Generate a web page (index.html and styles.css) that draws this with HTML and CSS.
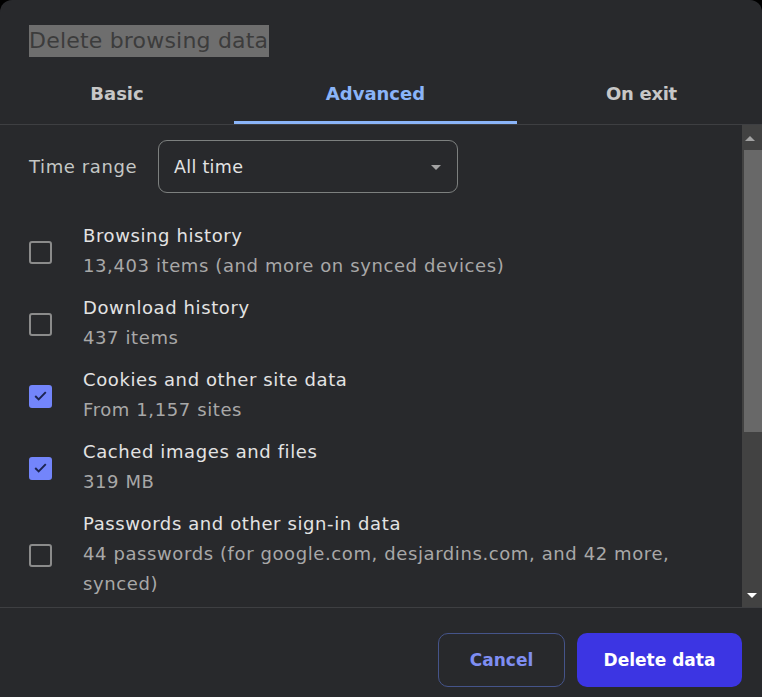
FILE: index.html
```html
<!DOCTYPE html>
<html>
<head>
<meta charset="utf-8">
<link rel="stylesheet" href="styles.css">
</head>
<body>
<div class="dialog">
  <div class="title-wrap"><span class="title">Delete browsing data</span></div>
  <div class="tabs">
    <div class="tab tab-basic">Basic</div>
    <div class="tab tab-adv active">Advanced</div>
    <div class="tab tab-exit">On exit</div>
  </div>
  <div class="body">
    <div class="content">
      <div class="range">
        <span class="range-label">Time range</span>
        <div class="select"><span>All time</span><span class="caret"></span></div>
      </div>
      <div class="items">
        <div class="item">
          <span class="box"></span>
          <div class="texts"><div class="it-title">Browsing history</div><div class="it-sub">13,403 items (and more on synced devices)</div></div>
        </div>
        <div class="item">
          <span class="box"></span>
          <div class="texts"><div class="it-title">Download history</div><div class="it-sub">437 items</div></div>
        </div>
        <div class="item">
          <span class="box checked"><svg viewBox="0 0 24 24" width="23" height="23"><path d="M6.5 12.5l3.6 3.6 7.4-7.6" fill="none" stroke="#1c2450" stroke-width="2"/></svg></span>
          <div class="texts"><div class="it-title">Cookies and other site data</div><div class="it-sub">From 1,157 sites</div></div>
        </div>
        <div class="item">
          <span class="box checked"><svg viewBox="0 0 24 24" width="23" height="23"><path d="M6.5 12.5l3.6 3.6 7.4-7.6" fill="none" stroke="#1c2450" stroke-width="2"/></svg></span>
          <div class="texts"><div class="it-title">Cached images and files</div><div class="it-sub">319 MB</div></div>
        </div>
        <div class="item">
          <span class="box"></span>
          <div class="texts"><div class="it-title">Passwords and other sign-in data</div><div class="it-sub">44 passwords (for google.com, desjardins.com, and 42 more, synced)</div></div>
        </div>
      </div>
    </div>
    <div class="scrollbar">
      <div class="arrow-up"></div>
      <div class="thumb"></div>
      <div class="track-rest"></div>
      <div class="arrow-down"></div>
    </div>
  </div>
  <div class="footer">
    <button class="btn cancel">Cancel</button>
    <button class="btn delete">Delete data</button>
  </div>
</div>
</body>
</html>
```
FILE: styles.css
```css
* { box-sizing: border-box; }
html, body { margin: 0; padding: 0; background: #000; }
body { width: 762px; height: 697px; overflow: hidden; font-family: "DejaVu Sans", "Open Sans", sans-serif; }
.dialog {
  width: 762px; height: 697px; background: #28292c;
  border-radius: 12px 12px 0 0;
  display: flex; flex-direction: column;
}
.title-wrap { padding: 25px 0 0 29px; height: 57px; }
.title {
  display: inline-block; height: 32px; line-height: 32px;
  background: #6e6e6e; color: #3c3c3c; font-size: 22px; letter-spacing: 0.2px;
  padding-right: 1px;
}
.tabs { display: flex; height: 68px; border-bottom: 1px solid #3e3f42; }
.tab {
  display: flex; justify-content: center; align-items: flex-start;
  padding-top: 26px; font-size: 18px; font-weight: 600; color: #c7c7c7;
  border-bottom: 3px solid transparent;
}
.tab-basic { width: 234px; }
.tab-adv { width: 283px; }
.tab-exit { width: 245px; padding-left: 4px; letter-spacing: -0.3px; }
.tab.active { color: #8ab4f8; border-bottom-color: #8ab4f8; border-radius: 3px 3px 0 0; }
.body { display: flex; height: 483px; border-bottom: 1px solid #3e3f42; }
.content { flex: 1; padding: 15px 0 0 29px; overflow: hidden; }
.range { display: flex; align-items: center; height: 53px; }
.range-label { font-size: 18px; letter-spacing: 0.6px; color: #c4c7c5; width: 129px; }
.select {
  width: 300px; height: 53px; border: 1px solid #7d807f; border-radius: 9px;
  display: flex; align-items: center; justify-content: space-between;
  padding: 0 16px 0 15px; font-size: 17.5px; letter-spacing: 0.3px; color: #e3e3e3;
}
.caret { width: 0; height: 0; border-left: 5px solid transparent; border-right: 5px solid transparent; border-top: 5px solid #a3a3a3; margin-top: 1px; }
.items { display: flex; flex-direction: column; gap: 12px; padding-top: 28px; }
.item { display: flex; align-items: center; }
.box {
  width: 23px; height: 23px; border: 2.5px solid #8b8b8b; border-radius: 3px;
  flex: none; margin-right: 31px; margin-top: 2px; position: relative;
}
.box.checked { background: #7385fb; border-color: #7385fb; }
.box svg { position: absolute; left: -2.5px; top: -2.5px; }
.texts { font-size: 18px; letter-spacing: 0.6px; line-height: 30px; width: 625px; }
.it-title { color: #e3e3e3; }
.it-sub { color: #a8a8a8; }
.scrollbar { width: 20px; background: #424242; display: flex; flex-direction: column; align-items: flex-end; }
.arrow-up { width: 0; height: 0; margin: 11px 5px 0 0; border-left: 5px solid transparent; border-right: 5px solid transparent; border-bottom: 5px solid #a3a3a3; align-self: center; }
.thumb { width: 18px; height: 282px; background: #686868; margin-top: 9px; }
.track-rest { flex: 1; }
.arrow-down { width: 0; height: 0; margin: 0 0 9px 0; border-left: 5px solid transparent; border-right: 5px solid transparent; border-top: 5px solid #ffffff; align-self: center; }
.footer { flex: 1; display: flex; justify-content: flex-end; align-items: flex-start; padding: 25px 20px 0 0; gap: 12px; }
.btn {
  height: 54px; border-radius: 10px; font-family: "DejaVu Sans", "Open Sans", sans-serif;
  font-size: 17px; font-weight: 700; cursor: pointer;
}
.cancel { width: 127px; background: transparent; border: 1px solid #45548a; color: #7f8ef2; }
.delete { width: 165px; background: #3c35e3; border: none; color: #ffffff; }
```
